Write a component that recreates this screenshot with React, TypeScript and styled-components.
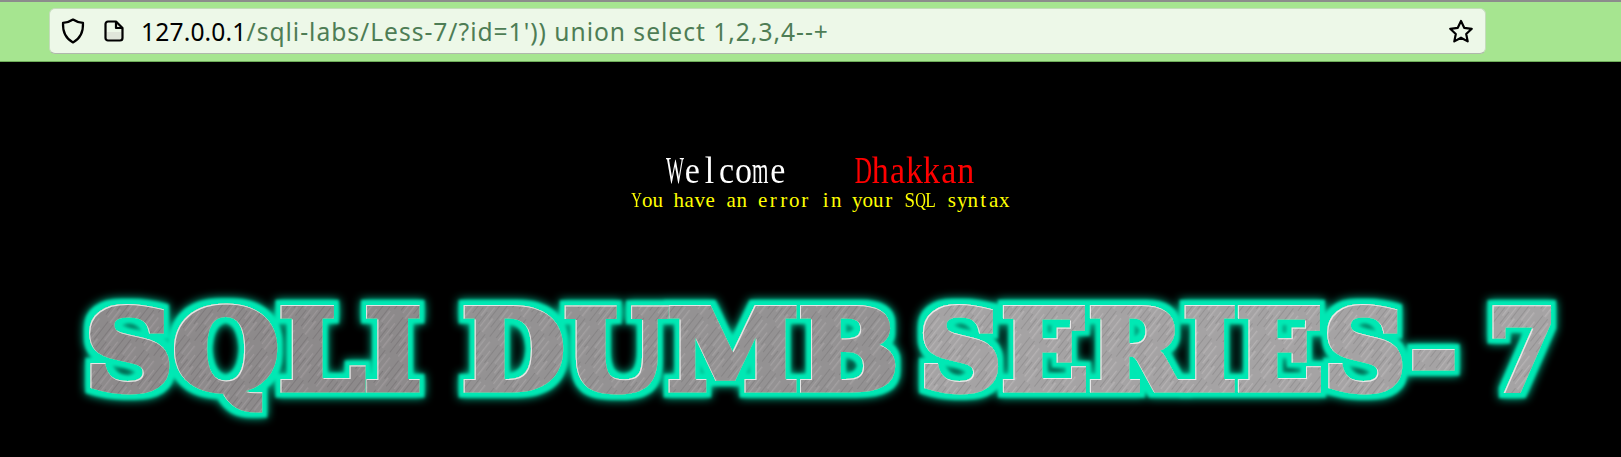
import styled, { createGlobalStyle } from "styled-components";

const GlobalStyle = createGlobalStyle`
  html, body {
    margin: 0;
    height: 100%;
    background: #000;
    overflow: hidden;
  }
`

const Toolbar = styled.header`
  height: 59px;
  box-sizing: content-box;
  border-top: 2px solid #8c8c8c;
  border-bottom: 1px solid #6fae5a;
  background: #a6e590;
  padding: 0 135px 0 49px;
  display: flex;
  align-items: flex-start;
`

const UrlBar = styled.div`
  flex: 1;
  height: 46px;
  margin-top: 6px;
  box-sizing: border-box;
  padding: 0 11px 0 11px;
  display: flex;
  align-items: center;
  background: #edf8e8;
  border-radius: 6px;
  border: 1px solid #c4dcbb;
  border-bottom-color: #b0b8ac;
`

const IconSlot = styled.span<{ $w: number }>`
  display: flex;
  flex: none;
  width: ${(p) => p.$w}px;
`

const UrlText = styled.div`
  flex: 1;
  font-family: "Noto Sans", sans-serif;
  font-size: 24.6px;
  letter-spacing: 0.98px;
  color: #4e7d55;
  white-space: pre;
`

const Host = styled.span`
  color: #000;
  letter-spacing: 0.15px;
`

const Main = styled.main`
  padding-left: 20px;
  display: flex;
  flex-direction: column;
  align-items: center;
`

const Greeting = styled.div`
  margin-top: 92px;
  font-family: "Liberation Serif", serif;
  font-size: 34px;
  line-height: 34px;
  color: #fff;
  white-space: pre;
  transform: scaleY(1.1);
`

const Name = styled.span`
  color: #f00;
`

const ErrorLine = styled.div`
  margin-top: 1px;
  font-family: "Liberation Serif", serif;
  font-size: 21px;
  line-height: 22px;
  color: #ff0;
  white-space: pre;
`

// the reference font is a serif with fixed width cells
const Cell = styled.span<{ $w: number }>`
  display: inline-block;
  width: ${(p) => p.$w}px;
  text-align: center;
`

const Squeezed = styled.span<{ $x: number }>`
  display: inline-block;
  transform: scaleX(${(p) => p.$x});
  margin: 0 -10px;
`

const Logo = styled.svg`
  display: block;
  margin-top: 72px;
  width: 1520px;
  height: 150px;
`

const LogoWord = styled.text<{ $fill: string }>`
  font-family: "DejaVu Serif", serif;
  font-weight: 700;
  font-size: 110px;
  fill: url(#${(p) => p.$fill});
  stroke: url(#${(p) => p.$fill});
  stroke-width: 7px;
  stroke-linejoin: miter;
`

const squeeze: Record<string, number> = { W: 0.56, m: 0.62, D: 0.7, Y: 0.7, Q: 0.7, L: 0.82, S: 0.9 }

function Fixed({ text, cell }: { text: string; cell: number }) {
  return (
    <>
      {text.split("").map((c, i) => (
        <Cell key={i} $w={cell}>
          {squeeze[c] ? <Squeezed $x={squeeze[c]}>{c}</Squeezed> : c}
        </Cell>
      ))}
    </>
  )
}

function ShieldIcon() {
  return (
    <svg width="24" height="26" viewBox="0 0 24 26" fill="none" stroke="#000" strokeWidth="2.2" strokeLinejoin="round">
      <path d="M12 1.5 C15 3.6 18.5 4.6 22 4.8 C22.4 14 19 20.8 12 24.4 C5 20.8 1.6 14 2 4.8 C5.5 4.6 9 3.6 12 1.5 Z" />
    </svg>
  )
}

function PageIcon() {
  return (
    <svg width="20" height="22" viewBox="0 0 20 22" fill="none" stroke="#000" strokeWidth="2.2" strokeLinejoin="round">
      <path d="M12 1.5 L18.5 8 V18 A2.5 2.5 0 0 1 16 20.5 H4 A2.5 2.5 0 0 1 1.5 18 V4 A2.5 2.5 0 0 1 4 1.5 Z" fill="#e0e6da" />
      <path d="M3 3 H11 V9 H17 V12 H3 Z" fill="#edf8e8" stroke="none" />
      <path d="M12 1.5 V8 H18.5" />
    </svg>
  )
}

function StarIcon() {
  return (
    <svg width="26" height="25" viewBox="0 0 26 25" fill="none" stroke="#000" strokeWidth="2.2" strokeLinejoin="round">
      <path d="M13 2 L16.2 8.8 L23.8 9.8 L18.2 15 L19.7 22.4 L13 18.7 L6.3 22.4 L7.8 15 L2.2 9.8 L9.8 8.8 Z" />
    </svg>
  )
}

function Brushed({ id, base, light, dark }: { id: string; base: string; light: string; dark: string }) {
  return (
    <pattern id={id} width="37" height="23" patternUnits="userSpaceOnUse" patternTransform="rotate(-52)">
      <rect width="37" height="23" fill={base} />
      <rect x="3" y="1" width="24" height="1.2" fill={light} />
      <rect x="14" y="4" width="23" height="0.8" fill={dark} />
      <rect x="0" y="6" width="17" height="1.6" fill={light} />
      <rect x="9" y="10" width="28" height="0.8" fill={dark} />
      <rect x="20" y="12.5" width="14" height="1.4" fill={light} />
      <rect x="1" y="15" width="19" height="0.8" fill={dark} />
      <rect x="12" y="18" width="22" height="1.4" fill={light} />
      <rect x="4" y="21" width="15" height="0.8" fill={dark} />
    </pattern>
  )
}

function SeriesLogo() {
  return (
    <Logo viewBox="60 280 1520 150">
      <defs>
        <Brushed id="brushedDark" base="#8d8a8b" light="#9c9799" dark="#7a7678" />
        <Brushed id="brushedMid" base="#949293" light="#a3a0a1" dark="#828081" />
        <Brushed id="brushedLight" base="#a5a3a4" light="#b5b2b3" dark="#908e8f" />
        <filter id="glow" x="-5%" y="-30%" width="110%" height="160%">
          <feMorphology in="SourceAlpha" operator="dilate" radius="5" result="fat" />
          <feFlood floodColor="#05e8b4" />
          <feComposite in2="fat" operator="in" result="core" />
          <feGaussianBlur in="core" stdDeviation="1.6" result="coreSoft" />
          <feGaussianBlur in="core" stdDeviation="5" result="halo" />
          <feOffset in="SourceAlpha" dx="0.6" dy="1" result="shifted" />
          <feFlood floodColor="#ffffff" floodOpacity="0.7" />
          <feComposite in2="SourceAlpha" operator="in" result="white" />
          <feComposite in="white" in2="shifted" operator="out" result="rim" />
          <feMerge>
            <feMergeNode in="halo" />
            <feMergeNode in="coreSoft" />
            <feMergeNode in="SourceGraphic" />
            <feMergeNode in="rim" />
          </feMerge>
        </filter>
      </defs>
      <g filter="url(#glow)">
        <LogoWord $fill="brushedDark" x="84" y="386" textLength="336" lengthAdjust="spacingAndGlyphs">SQLI</LogoWord>
        <LogoWord $fill="brushedMid" x="461" y="386" textLength="436" lengthAdjust="spacingAndGlyphs">DUMB</LogoWord>
        <LogoWord $fill="brushedLight" x="918" y="386" textLength="538" lengthAdjust="spacingAndGlyphs">SERIES-</LogoWord>
        <LogoWord $fill="brushedLight" x="1487" y="386" textLength="68" lengthAdjust="spacingAndGlyphs">7</LogoWord>
      </g>
    </Logo>
  )
}

export default function App() {
  return (
    <>
      <GlobalStyle />
      <Toolbar>
        <UrlBar>
          <IconSlot $w={43}><ShieldIcon /></IconSlot>
          <IconSlot $w={37}><PageIcon /></IconSlot>
          <UrlText><Host>127.0.0.1</Host>/sqli-labs/Less-7/?id=1')) union select 1,2,3,4--+</UrlText>
          <StarIcon />
        </UrlBar>
      </Toolbar>
      <Main>
        <Greeting>
          <Fixed text="Welcome" cell={17.1} />
          <Cell $w={68.4} />
          <Name><Fixed text="Dhakkan" cell={17.1} /></Name>
        </Greeting>
        <ErrorLine><Fixed text="You have an error in your SQL syntax" cell={10.5} /></ErrorLine>
        <SeriesLogo />
      </Main>
    </>
  )
}
